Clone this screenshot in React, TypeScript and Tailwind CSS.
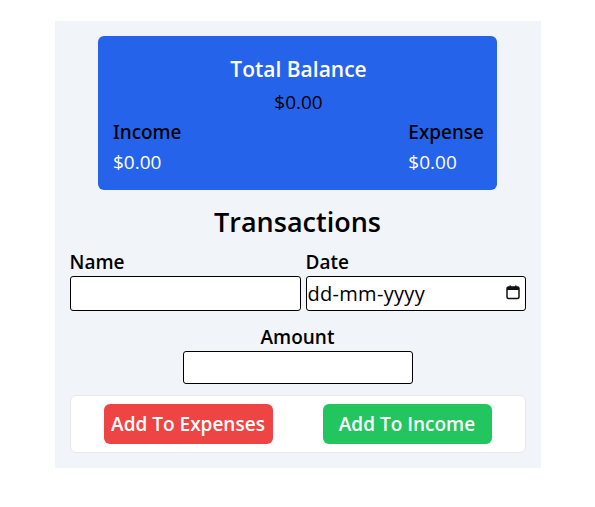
import React from "react";

const CalendarIcon = () => (
  <svg width="16" height="16" viewBox="0 0 16 16" fill="none">
    <rect x="2" y="3" width="12" height="11.5" rx="1.5" stroke="#111" strokeWidth="1.5" />
    <rect x="2" y="3" width="12" height="3" fill="#111" />
    <rect x="4.5" y="1.5" width="1.5" height="2" fill="#111" />
    <rect x="10" y="1.5" width="1.5" height="2" fill="#111" />
  </svg>
);

export default function App() {
  return (
    <div className="min-h-[507px] bg-white pt-[21px] font-['Open_Sans',sans-serif]">
      <div className="mx-auto w-[486px] bg-[#f1f5f9] px-[15px] pb-[15px] pt-[15px]">
        {/* Balance card */}
        <div className="mx-auto w-[399px] rounded-md bg-[#2563eb] pb-[14px] pl-[15px] pr-[13px] pt-[19px]">
          <h2 className="text-center text-[21px] leading-7 font-semibold text-white">Total Balance</h2>
          <p className="mt-[5px] text-center text-[19px] leading-7 text-black">$0.00</p>
          <div className="mt-[2px] flex justify-between">
            <div>
              <p className="font-['Noto_Sans',sans-serif] text-[19px] leading-7 font-medium text-black">Income</p>
              <p className="mt-[2px] text-[19px] leading-7 text-white">$0.00</p>
            </div>
            <div>
              <p className="font-['Noto_Sans',sans-serif] text-[19px] leading-7 font-medium text-black">Expense</p>
              <p className="mt-[2px] text-[19px] leading-7 text-white">$0.00</p>
            </div>
          </div>
        </div>

        <h1 className="mt-4 text-center text-[27px] leading-8 font-semibold text-black">Transactions</h1>

        <div className="mt-[10px] flex gap-[5px]">
          <div className="flex w-[231px] flex-col">
            <label className="text-[19px] leading-7 font-semibold text-black">Name</label>
            <input type="text" className="h-[35px] rounded-[3px] border border-black bg-white px-1 text-xl outline-none" />
          </div>
          <div className="flex w-[220px] flex-col">
            <label className="text-[19px] leading-7 font-semibold text-black">Date</label>
            <div className="relative">
              <input
                type="text"
                placeholder="dd-mm-yyyy"
                className="h-[35px] w-full rounded-[3px] border border-black bg-white pl-[1px] text-xl tracking-[0.3px] outline-none placeholder:text-black"
              />
              <span className="absolute right-[5px] top-[8px]">
                <CalendarIcon />
              </span>
            </div>
          </div>
        </div>

        <div className="mt-3 flex flex-col items-center">
          <label className="text-[19px] leading-7 font-semibold text-black">Amount</label>
          <input type="number" className="h-[33px] w-[230px] rounded-[3px] border border-black bg-white px-1 text-xl outline-none" />
        </div>

        <div className="mt-[11px] flex justify-center gap-[50px] rounded-md border border-gray-200 bg-white py-[8px]">
          <button className="h-10 w-[169px] rounded-md bg-[#ef4444] text-[19px] font-semibold text-white">Add To Expenses</button>
          <button className="h-10 w-[169px] rounded-md bg-[#22c55e] text-[19px] font-semibold text-white">Add To Income</button>
        </div>
      </div>
    </div>
  );
}
